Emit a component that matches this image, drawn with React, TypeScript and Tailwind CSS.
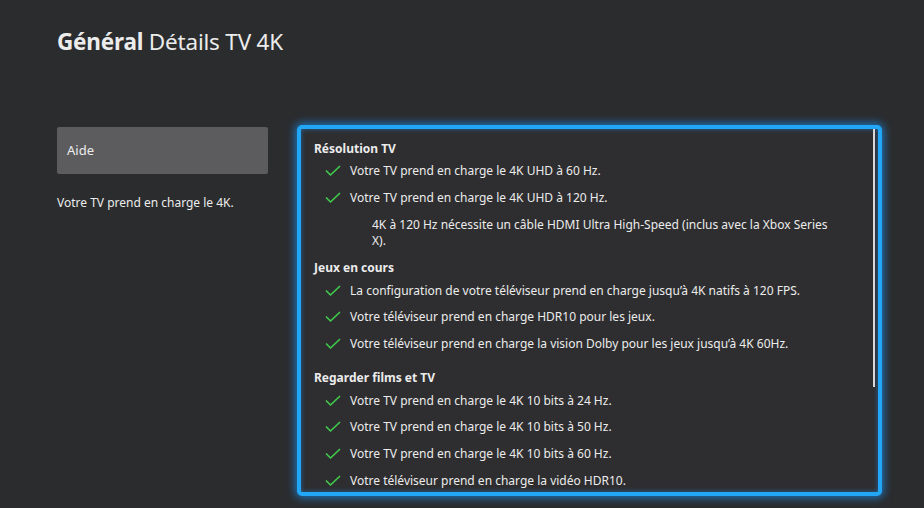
import React from "react";

type Row = { text: string };

const Check = () => (
  <svg width="16" height="12" viewBox="0 0 16 12" className="shrink-0">
    <polyline
      points="1.5,6 5.5,10 14.5,1.5"
      fill="none"
      stroke="#3fc94a"
      strokeWidth="1.7"
      strokeLinecap="round"
      strokeLinejoin="round"
    />
  </svg>
);

function CheckRow({ text }: Row) {
  return (
    <div className="flex items-center h-[26.67px] pl-[11px] gap-[9px]">
      <Check />
      <span>{text}</span>
    </div>
  );
}

function Heading({ children, className = "" }: { children: React.ReactNode; className?: string }) {
  return <div className={"h-[18px] leading-[18px] font-bold " + className}>{children}</div>;
}

export default function App() {
  return (
    <div
      className="w-[924px] h-[508px] bg-[#2b2c2e] text-[#ececec] overflow-hidden pl-[57px] pt-[28px]"
      style={{ fontFamily: '"Noto Sans", "Open Sans", sans-serif' }}
    >
      <h1 className="text-[22.5px] leading-[28px] tracking-[-0.2px]">
        <span className="font-bold">Général</span> Détails TV 4K
      </h1>

      <div className="flex mt-[69px]">
        {/* left column */}
        <div className="w-[211px] mt-[2px] text-[12px]">
          <div className="h-[47px] bg-[#5c5c5e] rounded-[2px] flex items-center pl-[10px] text-[13px]">
            Aide
          </div>
          <p className="mt-[21px] leading-[16px]">Votre TV prend en charge le 4K.</p>
        </div>

        {/* details panel */}
        <div className="relative ml-[29px] w-[585px] h-[371px] rounded-[5px] border-[4px] border-[#22a7f7] bg-[#2e2e30] shadow-[0_0_9px_2px_rgba(25,150,255,0.65),inset_0_0_5px_rgba(25,150,255,0.5)] overflow-hidden pl-[13px] pt-[11px] text-[12px]">
          <div className="absolute right-[3px] top-[0px] w-[2px] h-[258px] bg-[#d8d8d8]" />

          <Heading>Résolution TV</Heading>
          <CheckRow text="Votre TV prend en charge le 4K UHD à 60 Hz." />
          <CheckRow text="Votre TV prend en charge le 4K UHD à 120 Hz." />
          <p className="mt-[6px] ml-[58px] leading-[16px]">
            4K à 120 Hz nécessite un câble HDMI Ultra High-Speed (inclus avec la Xbox Series
            <br />
            X).
          </p>

          <Heading className="mt-[10px]">Jeux en cours</Heading>
          <CheckRow text="La configuration de votre téléviseur prend en charge jusqu’à 4K natifs à 120 FPS." />
          <CheckRow text="Votre téléviseur prend en charge HDR10 pour les jeux." />
          <CheckRow text="Votre téléviseur prend en charge la vision Dolby pour les jeux jusqu’à 4K 60Hz." />

          <Heading className="mt-[12px]">Regarder films et TV</Heading>
          <CheckRow text="Votre TV prend en charge le 4K 10 bits à 24 Hz." />
          <CheckRow text="Votre TV prend en charge le 4K 10 bits à 50 Hz." />
          <CheckRow text="Votre TV prend en charge le 4K 10 bits à 60 Hz." />
          <CheckRow text="Votre téléviseur prend en charge la vidéo HDR10." />
        </div>
      </div>
    </div>
  );
}
